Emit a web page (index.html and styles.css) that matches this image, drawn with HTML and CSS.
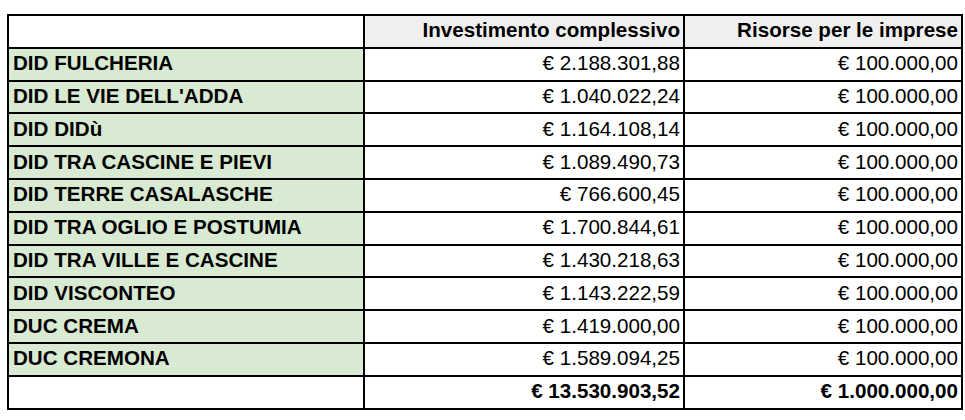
FILE: index.html
```html
<!DOCTYPE html>
<html lang="it">
<head>
<meta charset="utf-8">
<title>Tabella DID / DUC</title>
<link rel="stylesheet" href="styles.css">
</head>
<body>
<table class="sheet">
  <colgroup>
    <col class="c-name">
    <col class="c-inv">
    <col class="c-ris">
  </colgroup>
  <thead>
    <tr>
      <th class="blank"></th>
      <th class="head">Investimento complessivo</th>
      <th class="head">Risorse per le imprese</th>
    </tr>
  </thead>
  <tbody>
    <tr><td class="name">DID FULCHERIA</td><td class="num">€ 2.188.301,88</td><td class="num">€ 100.000,00</td></tr>
    <tr><td class="name">DID LE VIE DELL'ADDA</td><td class="num">€ 1.040.022,24</td><td class="num">€ 100.000,00</td></tr>
    <tr><td class="name">DID DIDù</td><td class="num">€ 1.164.108,14</td><td class="num">€ 100.000,00</td></tr>
    <tr><td class="name">DID TRA CASCINE E PIEVI</td><td class="num">€ 1.089.490,73</td><td class="num">€ 100.000,00</td></tr>
    <tr><td class="name">DID TERRE CASALASCHE</td><td class="num">€ 766.600,45</td><td class="num">€ 100.000,00</td></tr>
    <tr><td class="name">DID TRA OGLIO E POSTUMIA</td><td class="num">€ 1.700.844,61</td><td class="num">€ 100.000,00</td></tr>
    <tr><td class="name">DID TRA VILLE E CASCINE</td><td class="num">€ 1.430.218,63</td><td class="num">€ 100.000,00</td></tr>
    <tr><td class="name">DID VISCONTEO</td><td class="num">€ 1.143.222,59</td><td class="num">€ 100.000,00</td></tr>
    <tr><td class="name">DUC CREMA</td><td class="num">€ 1.419.000,00</td><td class="num">€ 100.000,00</td></tr>
    <tr><td class="name">DUC CREMONA</td><td class="num">€ 1.589.094,25</td><td class="num">€ 100.000,00</td></tr>
    <tr class="total"><td class="blank"></td><td class="num">€ 13.530.903,52</td><td class="num">€ 1.000.000,00</td></tr>
  </tbody>
</table>
</body>
</html>
```
FILE: styles.css
```css
html, body {
  margin: 0;
  padding: 0;
  background: #ffffff;
}

body {
  padding: 14px 0 0 7px;
  font-family: "Liberation Sans", Arial, sans-serif;
  font-size: 20.6px;
  color: #000000;
}

.sheet {
  border-collapse: collapse;
  table-layout: fixed;
  width: 954px;
}

.c-name { width: 356px; }
.c-inv { width: 320px; }
.c-ris { width: 278px; }

.sheet th,
.sheet td {
  border: 2px solid #000000;
  height: 30.8px;
  box-sizing: border-box;
  padding: 0 3px 3px 4px;
  line-height: 23px;
  vertical-align: middle;
  white-space: nowrap;
  overflow: hidden;
}

.sheet tr {
  height: 32.8px;
}

.blank {
  background: #ffffff;
}

.head {
  background: #efefef;
  font-weight: bold;
  text-align: right;
}

.name {
  background: #d9ead3;
  font-weight: bold;
  text-align: left;
}

.num {
  background: #ffffff;
  font-weight: normal;
  text-align: right;
}

.total .num {
  font-weight: bold;
}
```
